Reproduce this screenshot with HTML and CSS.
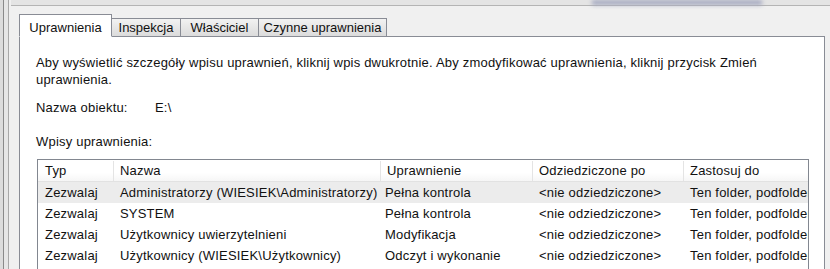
FILE: index.html
```html
<!DOCTYPE html>
<html>
<head>
    <title>Uprawnienia</title>
    <link rel="stylesheet" href="styles.css">
</head>
<body>
    <div class="window">
        <div class="edge"></div>
        <div class="content">
            <div class="titlebar"><div class="blur"></div></div>
            <div class="tabs">
                <div class="tab active" style="width: 91px">Uprawnienia</div>
                <div class="tab" style="width: 68px">Inspekcja</div>
                <div class="tab" style="width: 77px">Właściciel</div>
                <div class="tab" style="width: 127px">Czynne uprawnienia</div>
            </div>
            <div class="panel">
                <p class="info">Aby wyświetlić szczegóły wpisu uprawnień, kliknij wpis dwukrotnie. Aby zmodyfikować uprawnienia, kliknij przycisk Zmień uprawnienia.</p>
                <div class="object">
                    <span class="label">Nazwa obiektu:</span>
                    <span>E:\</span>
                </div>
                <div class="list-title">Wpisy uprawnienia:</div>
                <div class="listview">
                    <div class="row header">
                        <div class="cell">Typ</div>
                        <div class="cell">Nazwa</div>
                        <div class="cell">Uprawnienie</div>
                        <div class="cell">Odziedziczone po</div>
                        <div class="cell">Zastosuj do</div>
                    </div>
                    <div class="row hot">
                        <div class="cell">Zezwalaj</div>
                        <div class="cell">Administratorzy (WIESIEK\Administratorzy)</div>
                        <div class="cell">Pełna kontrola</div>
                        <div class="cell">&lt;nie odziedziczone&gt;</div>
                        <div class="cell">Ten folder, podfoldery i pliki</div>
                    </div>
                    <div class="row">
                        <div class="cell">Zezwalaj</div>
                        <div class="cell">SYSTEM</div>
                        <div class="cell">Pełna kontrola</div>
                        <div class="cell">&lt;nie odziedziczone&gt;</div>
                        <div class="cell">Ten folder, podfoldery i pliki</div>
                    </div>
                    <div class="row">
                        <div class="cell">Zezwalaj</div>
                        <div class="cell">Użytkownicy uwierzytelnieni</div>
                        <div class="cell">Modyfikacja</div>
                        <div class="cell">&lt;nie odziedziczone&gt;</div>
                        <div class="cell">Ten folder, podfoldery i pliki</div>
                    </div>
                    <div class="row">
                        <div class="cell">Zezwalaj</div>
                        <div class="cell">Użytkownicy (WIESIEK\Użytkownicy)</div>
                        <div class="cell">Odczyt i wykonanie</div>
                        <div class="cell">&lt;nie odziedziczone&gt;</div>
                        <div class="cell">Ten folder, podfoldery i pliki</div>
                    </div>
                </div>
            </div>
        </div>
    </div>
</body>
</html>
```

FILE: styles.css
```css
body {
    margin: 0;
    background: #f0f0f0;
    font-family: 'Liberation Sans', Arial, sans-serif;
    font-size: 13px;
    letter-spacing: 0.2px;
    color: #111;
    overflow: hidden;
}

.window {
    display: flex;
    height: 269px;
}

.edge {
    width: 5px;
    border-left: 3px solid #dcdcdc;
    border-right: 1px solid #a8a8a8;
    box-shadow: inset 1px 0 0 #8a8a8a;
    background: #e6e6e6;
    margin-right: 2px;
}

.content {
    flex: 1;
    display: flex;
    flex-direction: column;
}

.titlebar {
    height: 7px;
    background: #e4e4e4;
    border-bottom: 1px solid #b4b4b4;
    display: flex;
    justify-content: flex-end;
    padding-right: 68px;
}

.blur {
    width: 170px;
    height: 5px;
    background: #a4a8c0;
    filter: blur(2px);
}

.tabs {
    display: flex;
    align-items: flex-end;
    padding: 8px 0 0 8px;
    margin-bottom: -1px;
}

.tab {
    height: 18px;
    line-height: 18px;
    text-align: center;
    border: 1px solid #898c95;
    border-bottom: none;
    border-left: none;
    background: linear-gradient(#f2f2f2, #dadada);
    white-space: nowrap;
    letter-spacing: 0;
}

.tab.active {
    height: 21px;
    line-height: 25px;
    background: #fff;
    border-left: 1px solid #898c95;
    border-bottom: 1px solid #fff;
    margin-right: -1px;
    position: relative;
    z-index: 1;
}

.tab.active + .tab {
    border-left: 1px solid #898c95;
}

.panel {
    flex: 1;
    margin: 0 5px 0 8px;
    background: #fff;
    border: 1px solid #898c95;
    border-bottom: none;
    padding: 17px 15px 0 16px;
}

.info {
    margin: 0;
    line-height: 17px;
    padding-right: 40px;
}

.object {
    margin-top: 12px;
    display: flex;
}

.object .label {
    width: 119px;
}

.list-title {
    margin-top: 19px;
}

.listview {
    margin-top: 10px;
    margin-left: 1px;
    border: 1px solid #828790;
    border-bottom: none;
    height: 120px;
    overflow: hidden;
}

.row {
    display: grid;
    grid-template-columns: 75px 267px 152px 151px 1fr;
    height: 21px;
    line-height: 21px;
}

.row.header {
    height: 22px;
    line-height: 20px;
    padding-top: 1px;
    background: linear-gradient(#fff 60%, #f6f6f6);
    border-bottom: 1px solid #e2e2e2;
    box-sizing: border-box;
}

.row.hot {
    background: #ececec;
}

.cell {
    padding-left: 7px;
    white-space: nowrap;
    overflow: hidden;
}

.row.header .cell + .cell {
    border-left: 1px solid #e4e4e4;
    padding-left: 6px;
}

.row .cell:nth-child(3) {
    padding-left: 5px;
}
```
